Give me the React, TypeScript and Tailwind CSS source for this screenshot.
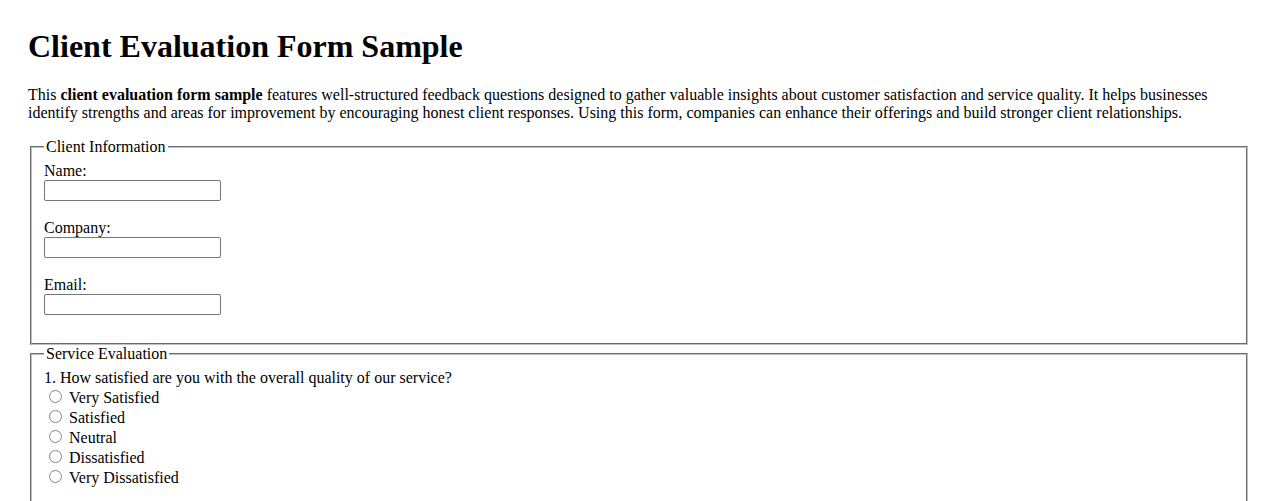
import React from "react";

const serif = { fontFamily: '"Liberation Serif", "Times New Roman", serif' };

const clientFields = [
  { id: "name", label: "Name:" },
  { id: "company", label: "Company:" },
  { id: "email", label: "Email:" },
];

const questions = [
  {
    name: "quality",
    text: "1. How satisfied are you with the overall quality of our service?",
    options: ["Very Satisfied", "Satisfied", "Neutral", "Dissatisfied", "Very Dissatisfied"],
  },
];

function Fieldset({ legend, children }: { legend: string; children: React.ReactNode }) {
  return (
    <fieldset className="mx-[2px] border-2 border-[#c0c0c0] px-[12px] pt-[5.6px] pb-[10px] [border-style:groove]">
      <legend className="px-[2px]">{legend}</legend>
      {children}
    </fieldset>
  );
}

export default function App() {
  return (
    <div className="min-h-screen bg-white px-[28px] pt-[28px] text-[16px] leading-[normal] text-black" style={serif}>
      <h1 className="mb-[21.44px] text-[32px] font-bold leading-[normal]">Client Evaluation Form Sample</h1>

      <p className="my-[16px]">
        This <strong className="font-bold">client evaluation form sample</strong> features well-structured feedback
        questions designed to gather valuable insights about customer satisfaction and service quality. It helps
        businesses identify strengths and areas for improvement by encouraging honest client responses. Using this
        form, companies can enhance their offerings and build stronger client relationships.
      </p>

      <form>
        <Fieldset legend="Client Information">
          {clientFields.map((f) => (
            <div key={f.id}>
              <label htmlFor={f.id} className="block">
                {f.label}
              </label>
              <input
                id={f.id}
                name={f.id}
                type={f.id === "email" ? "email" : "text"}
                className="mb-[18px] block h-[21px] w-[177px] rounded-[2px] border border-[#767676] bg-white px-[2px] py-[1px] text-[13.333px]"
                style={{ fontFamily: '"Liberation Sans", Arial, sans-serif' }}
              />
            </div>
          ))}
        </Fieldset>

        <Fieldset legend="Service Evaluation">
          {questions.map((q) => (
            <div key={q.name} className="mb-[18.4px]">
              <div>{q.text}</div>
              {q.options.map((opt) => (
                <div key={opt} className="flex h-[20px] items-end">
                  <input
                    type="radio"
                    id={`${q.name}-${opt}`}
                    name={q.name}
                    className="mr-[7px] ml-[5px] mb-[3.8px] h-[13px] w-[13px] shrink-0 appearance-none rounded-full border border-[#858585] bg-white"
                  />
                  <label htmlFor={`${q.name}-${opt}`} className="leading-[normal]">
                    {opt}
                  </label>
                </div>
              ))}
            </div>
          ))}
        </Fieldset>
      </form>
    </div>
  );
}
